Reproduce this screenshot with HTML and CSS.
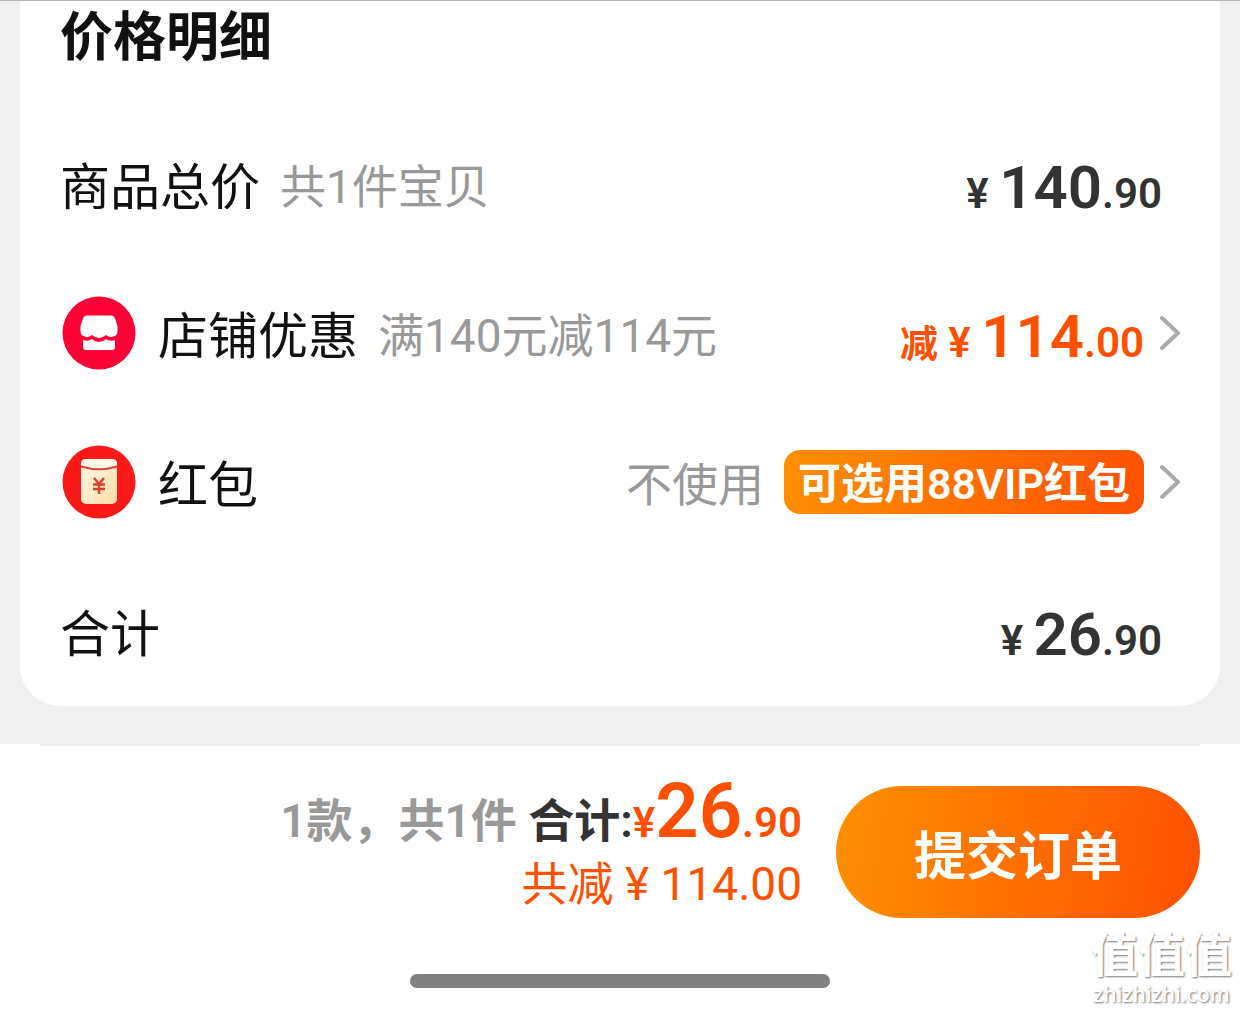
FILE: index.html
```html
<!DOCTYPE html>
<html lang="zh-CN">
<head>
    <meta charset="UTF-8">
    <meta name="viewport" content="width=device-width, initial-scale=1.0">
    <title>确认订单</title>
    <link rel="stylesheet" href="styles.css">
</head>
<body>
    <main class="page">
        <section class="card">
            <h2 class="card-title">价格明细</h2>

            <div class="row">
                <span class="label">商品总价</span>
                <span class="note">共1件宝贝</span>
                <span class="price">¥ <b>140</b>.90</span>
            </div>

            <a class="row row-link" href="#shop-discount">
                <svg class="icon" viewBox="0 0 78 78" aria-hidden="true">
                    <circle cx="39" cy="39" r="36.5" fill="#fd0236"/>
                    <path d="M27 21.5H51Q54 21.5 55 24.5L57.5 32V38Q57 42 53 42.5Q50 44 46 41Q43 44 39 44Q35 44 32 41Q28 44 25 42.5Q21 42 20.5 38V32L23 24.5Q24 21.5 27 21.5Z" fill="#fff"/>
                    <path d="M23 46Q28 48 32 45Q35 48 39 48Q43 48 46 45Q50 48 55 46V53Q55 56 52 56H26Q23 56 23 53Z" fill="#fff"/>
                </svg>
                <span class="label">店铺优惠</span>
                <span class="note">满140元减114元</span>
                <span class="price price-off"><span class="off">减</span> ¥ <b>114</b>.00</span>
                <svg class="chevron" viewBox="0 0 20 36" aria-hidden="true"><path d="M2 3L18 18L2 33"/></svg>
            </a>

            <a class="row row-link" href="#red-packet">
                <svg class="icon" viewBox="0 0 78 78" aria-hidden="true">
                    <defs>
                        <linearGradient id="packet" x1="0" y1="0" x2="1" y2="1">
                            <stop offset="0.2" stop-color="#fff3dc"/>
                            <stop offset="1" stop-color="#fbdca4"/>
                        </linearGradient>
                    </defs>
                    <circle cx="39" cy="39" r="36.5" fill="#fb1a17"/>
                    <rect x="21" y="16" width="36" height="45" rx="5" fill="url(#packet)"/>
                    <path d="M21 23V21Q21 16 26 16H52Q57 16 57 21V23Q39 29 21 23Z" fill="#fff6e8"/>
                    <path d="M21 23.5Q39 29 57 23.5" fill="none" stroke="#d9452f" stroke-width="2"/>
                    <path d="M34 35L39 41L44 35M33 41.5H45M33 46H45M39 41V51" fill="none" stroke="#d8402c" stroke-width="2.4"/>
                </svg>
                <span class="label">红包</span>
                <span class="unused">不使用</span>
                <span class="chip">可选用88VIP红包</span>
                <svg class="chevron" viewBox="0 0 20 36" aria-hidden="true"><path d="M2 3L18 18L2 33"/></svg>
            </a>

            <div class="row">
                <span class="label">合计</span>
                <span class="price">¥ <b>26</b>.90</span>
            </div>
        </section>
    </main>

    <footer class="submit-bar">
        <div class="submit">
            <div class="summary">
                <div class="total">
                    <span class="count">1款，共1件</span>
                    <span class="sum">合计:</span><span class="amount">¥<b>26</b>.90</span>
                </div>
                <div class="saved">共减 ¥ 114.00</div>
            </div>
            <button class="submit-button" type="button">提交订单</button>
        </div>
        <div class="home-bar"></div>
        <div class="watermark">
            <span class="watermark-name">值值值</span>
            <span class="watermark-site">zhizhizhi.com</span>
        </div>
    </footer>
</body>
</html>
```
FILE: styles.css
```css
* {
    box-sizing: border-box;
}

body {
    margin: 0;
    min-height: 100vh;
    display: flex;
    flex-direction: column;
    background-color: #fff;
    border-top: 1px solid #b4b4b4;
    color: #111;
    font-family: Roboto, "Noto Sans CJK SC", sans-serif;
}

.page {
    padding: 0 20px 38px;
    background-color: #f0f0f0;
}

.card {
    padding: 0 40px 1px;
    background-color: #fff;
    border-radius: 0 0 40px 40px;
}

.card-title {
    margin: 0;
    padding-bottom: 34px;
    font-size: 53px;
    line-height: 74px;
}

.row {
    display: flex;
    align-items: center;
    height: 149px;
    padding-right: 18px;
    color: inherit;
    text-decoration: none;
}

.row-link {
    padding-right: 0;
}

.icon {
    width: 78px;
    height: 78px;
    margin-right: 20px;
}

.label,
.note,
.unused {
    padding-bottom: 2px;
}

.label {
    font-size: 50px;
}

.note {
    margin-left: 20px;
}

.note,
.unused {
    color: #999;
    font-size: 46px;
}

.price {
    margin-left: auto;
    padding-top: 8px;
    color: #333;
    font-size: 42px;
    font-weight: 600;
}

.price b {
    font-size: 60px;
    font-weight: 600;
}

.price-off {
    color: #ff5000;
}

.off {
    font-size: 38px;
}

.unused {
    margin-left: auto;
}

.chip {
    margin-left: 20px;
    padding: 4px 14px 0;
    border-radius: 16px;
    background: linear-gradient(100deg, #ff9000, #ff5000);
    color: #fff;
    font-size: 43px;
    font-weight: 600;
    line-height: 60px;
}

.chevron {
    width: 20px;
    height: 36px;
    margin-left: 16px;
    fill: none;
    stroke: #aaa;
    stroke-width: 4;
    stroke-linecap: round;
}

.submit-bar {
    position: relative;
    flex: 1;
    padding: 0 40px 24px;
    display: flex;
    flex-direction: column;
}

.submit {
    display: flex;
    justify-content: flex-end;
    align-items: center;
    gap: 34px;
    padding-top: 40px;
    border-top: 2px solid #ededed;
}

.summary {
    text-align: right;
}

.total {
    font-size: 46px;
    font-weight: 600;
    line-height: 64px;
}

.count {
    color: #999;
}

.sum {
    color: #333;
}

.amount {
    color: #ff5000;
    font-size: 42px;
    line-height: 1;
}

.amount b {
    font-size: 76px;
    font-weight: 600;
    line-height: 0;
}

.saved {
    color: #ff5000;
    font-size: 46px;
    line-height: 62px;
}

.submit-button {
    width: 364px;
    height: 132px;
    border: 0;
    border-radius: 66px;
    background: linear-gradient(100deg, #ff9000, #ff5000);
    color: #fff;
    font-family: inherit;
    font-size: 52px;
    font-weight: bold;
}

.home-bar {
    width: 420px;
    max-width: 50%;
    height: 14px;
    margin: auto auto 0;
    border-radius: 7px;
    background-color: #808080;
}

.watermark {
    position: absolute;
    right: 8px;
    bottom: 6px;
    display: flex;
    flex-direction: column;
    align-items: center;
    color: #fff;
    font-weight: 600;
    text-shadow: 1px 1px 2px #777;
}

.watermark-name {
    font-size: 47px;
    line-height: 52px;
}

.watermark-site {
    font-family: "Open Sans", sans-serif;
    font-size: 21px;
    line-height: 24px;
}
```
